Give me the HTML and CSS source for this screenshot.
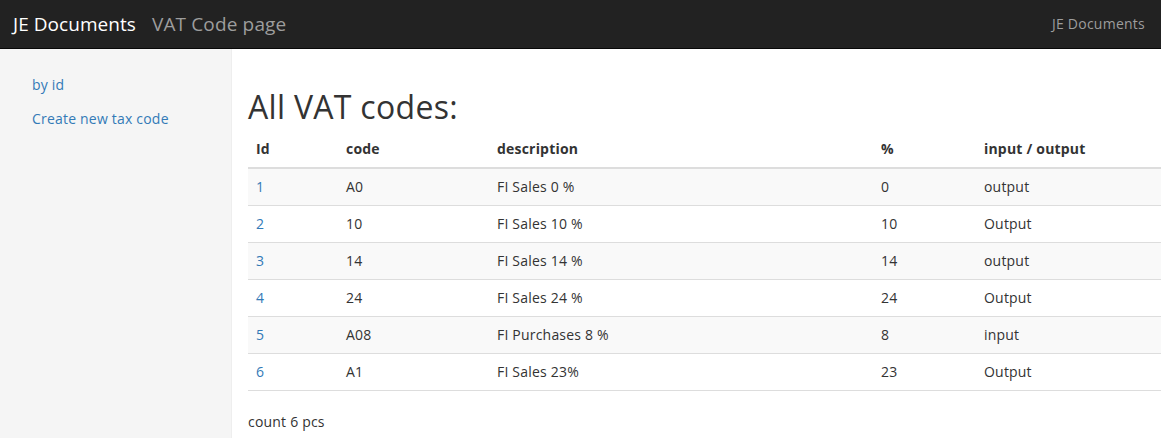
FILE: index.html
```html
<!DOCTYPE html>
<html>
<head>
<meta charset="utf-8">
<link rel="stylesheet" href="styles.css">
</head>
<body>
<header class="navbar">
  <div class="nav-left">
    <a class="brand">JE Documents</a>
    <a class="brand sub">VAT Code page</a>
  </div>
  <a class="nav-right">JE Documents</a>
</header>
<div class="layout">
  <aside class="sidebar">
    <a class="side-link">by id</a>
    <a class="side-link">Create new tax code</a>
  </aside>
  <main class="main">
    <h1 class="title">All VAT codes:</h1>
    <table class="tbl">
      <colgroup>
        <col class="c1"><col class="c2"><col class="c3"><col class="c4"><col class="c5">
      </colgroup>
      <thead>
        <tr><th>Id</th><th>code</th><th>description</th><th>%</th><th>input / output</th></tr>
      </thead>
      <tbody>
        <tr><td><a>1</a></td><td>A0</td><td>FI Sales 0 %</td><td>0</td><td>output</td></tr>
        <tr><td><a>2</a></td><td>10</td><td>FI Sales 10 %</td><td>10</td><td>Output</td></tr>
        <tr><td><a>3</a></td><td>14</td><td>FI Sales 14 %</td><td>14</td><td>output</td></tr>
        <tr><td><a>4</a></td><td>24</td><td>FI Sales 24 %</td><td>24</td><td>Output</td></tr>
        <tr><td><a>5</a></td><td>A08</td><td>FI Purchases 8 %</td><td>8</td><td>input</td></tr>
        <tr><td><a>6</a></td><td>A1</td><td>FI Sales 23%</td><td>23</td><td>Output</td></tr>
      </tbody>
    </table>
    <p class="count">count 6 pcs</p>
  </main>
</div>
</body>
</html>
```
FILE: styles.css
```css
* { box-sizing: border-box; }
html, body { margin: 0; padding: 0; }
body {
  font-family: "Open Sans", "Liberation Sans", sans-serif;
  font-size: 14px;
  line-height: 20px;
  letter-spacing: 0.2px;
  color: #333;
  background: #fff;
  overflow: hidden;
}
a { color: #337ab7; text-decoration: none; }
.navbar {
  height: 49px;
  background: #222;
  border-bottom: 1px solid #080808;
  display: flex;
  justify-content: space-between;
  align-items: center;
  padding: 0 16px 0 13px;
}
.nav-left { display: flex; align-items: center; gap: 16px; }
.brand { font-size: 19px; color: #fff; line-height: 20px; letter-spacing: 0.05px; }
.brand.sub { color: #9d9d9d; letter-spacing: 0.15px; }
.nav-right { color: #9d9d9d; font-size: 14px; letter-spacing: 0.25px; }
.layout { display: flex; height: 389px; }
.sidebar {
  width: 232px;
  flex: none;
  background: #f5f5f5;
  border-right: 1px solid #eee;
  padding: 26px 0 0 32px;
  display: flex;
  flex-direction: column;
  gap: 14px;
}
.side-link { line-height: 20px; }
.main { flex: 1; padding: 0 0 0 16px; min-width: 0; }
.title {
  font-size: 32px;
  font-weight: 400;
  line-height: 36px;
  letter-spacing: 0.3px;
  margin: 40px 0 8px;
  color: #333;
}
.tbl { width: 100%; border-collapse: collapse; table-layout: fixed; }
.c1 { width: 90px; }
.c2 { width: 151px; }
.c3 { width: 384px; }
.c4 { width: 103px; }
.tbl th {
  text-align: left;
  font-weight: 700;
  padding: 6px 8px 8px;
  border-bottom: 2px solid #ddd;
}
.tbl td {
  padding: 8px;
  border-bottom: 1px solid #ddd;
}
.tbl tbody tr:nth-child(odd) { background: #f9f9f9; }
.count { margin: 21px 0 0; }
```
